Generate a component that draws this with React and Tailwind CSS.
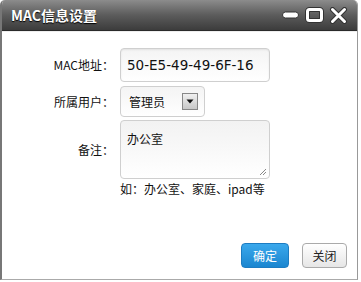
import React from 'react';

const cjk = { fontFamily: '"Noto Sans CJK SC", "Noto Sans", sans-serif' };

const TitleIcons = () => (
  <div className="flex items-center gap-[5px] pr-[9px]">
    <svg width="19" height="16" viewBox="0 0 19 16">
      <rect x="1.5" y="5" width="16" height="6" rx="3" fill="#fff" stroke="#333" strokeWidth="1" />
    </svg>
    <svg width="19" height="16" viewBox="0 0 19 16">
      <rect x="2.5" y="2.5" width="14" height="11" rx="2" fill="none" stroke="#333" strokeWidth="5" />
      <rect x="2.5" y="2.5" width="14" height="11" rx="2" fill="none" stroke="#fff" strokeWidth="3" />
    </svg>
    <svg width="19" height="17" viewBox="0 0 19 17">
      <path d="M3.5 2.5 L15.5 14.5 M15.5 2.5 L3.5 14.5" stroke="#333" strokeWidth="5" strokeLinecap="round" />
      <path d="M3.5 2.5 L15.5 14.5 M15.5 2.5 L3.5 14.5" stroke="#fff" strokeWidth="3" strokeLinecap="round" />
    </svg>
  </div>
);

const Label = ({ children }) => (
  <div className="w-[114px] pr-[2px] text-right text-[12px] text-[#111]" style={cjk}>
    {children}
  </div>
);

export default function App() {
  return (
    <div className="w-[361px] h-[282px] bg-white overflow-hidden">
      <div className="w-[358px] h-[280px] flex flex-col rounded-t-[5px] border-l-2 border-r border-b border-l-[#777] border-r-[#999] border-b-[#aaa] bg-white overflow-hidden">
        <div className="h-[31px] flex items-center justify-between bg-gradient-to-b from-[#8c8c8c] via-[#5c5c5c] to-[#3c3c3c] border-b border-[#2a2a2a]">
          <span
            className="pl-[9px] text-white text-[14px] font-bold [text-shadow:0_1px_1px_#000]"
            style={cjk}
          >
            MAC信息设置
          </span>
          <TitleIcons />
        </div>

        <div className="flex-1 flex flex-col border-t border-[#eee] pt-[16px]">
          <div className="flex items-center">
            <Label>MAC地址：</Label>
            <div className="ml-[4px] w-[150px] h-[34px] flex items-center pl-[6px] rounded-[4px] border border-[#cfcfcf] bg-gradient-to-b from-[#f4f4f4] to-white shadow-[inset_0_1px_2px_rgba(0,0,0,0.08)]">
              <span className="text-[13.5px] text-[#111]" style={{ fontFamily: '"DejaVu Sans", sans-serif' }}>
                50-E5-49-49-6F-16
              </span>
            </div>
          </div>

          <div className="flex items-center mt-[4px]">
            <Label>所属用户：</Label>
            <div className="ml-[4px] w-[85px] h-[31px] flex items-center justify-between pl-[8px] pr-[6px] rounded-[4px] border border-[#cfcfcf] bg-gradient-to-b from-[#f4f4f4] to-white">
              <span className="text-[12px] text-[#111]" style={cjk}>管理员</span>
              <div className="w-[16px] h-[17px] flex items-center justify-center border border-[#888] bg-gradient-to-b from-[#f0f0f0] to-[#c8c8c8]">
                <svg width="8" height="5" viewBox="0 0 8 5">
                  <path d="M0.5 0.5 L7.5 0.5 L4 4.5 Z" fill="#111" />
                </svg>
              </div>
            </div>
          </div>

          <div className="flex items-center mt-[3px]">
            <Label>备注：</Label>
            <div className="ml-[4px] relative w-[150px] h-[59px] pl-[6px] pt-[5px] rounded-[4px] border border-[#cfcfcf] bg-gradient-to-b from-[#f2f2f2] to-white">
              <span className="text-[12px] text-[#111]" style={cjk}>办公室</span>
              <svg className="absolute right-[2px] bottom-[2px]" width="8" height="8" viewBox="0 0 8 8">
                <path d="M7 1 L1 7 M7 4 L4 7" stroke="#888" strokeWidth="1" />
              </svg>
            </div>
          </div>

          <div className="pl-[118px] mt-[1px] text-[12px] text-[#111] leading-[18px]" style={cjk}>
            如：办公室、家庭、ipad等
          </div>

          <div className="flex-1" />

          <div className="flex justify-end gap-[13px] pr-[10px] pb-[11px]">
            <button
              className="w-[48px] h-[25px] rounded-[4px] text-white text-[12px] border border-[#1d7cc2] bg-gradient-to-b from-[#3aa8ec] to-[#1a86d0]"
              style={cjk}
            >
              确定
            </button>
            <button
              className="w-[45px] h-[25px] rounded-[4px] text-[#222] text-[12px] border border-[#aaa] bg-gradient-to-b from-white to-[#e6e6e6]"
              style={cjk}
            >
              关闭
            </button>
          </div>
        </div>
      </div>
    </div>
  );
}
